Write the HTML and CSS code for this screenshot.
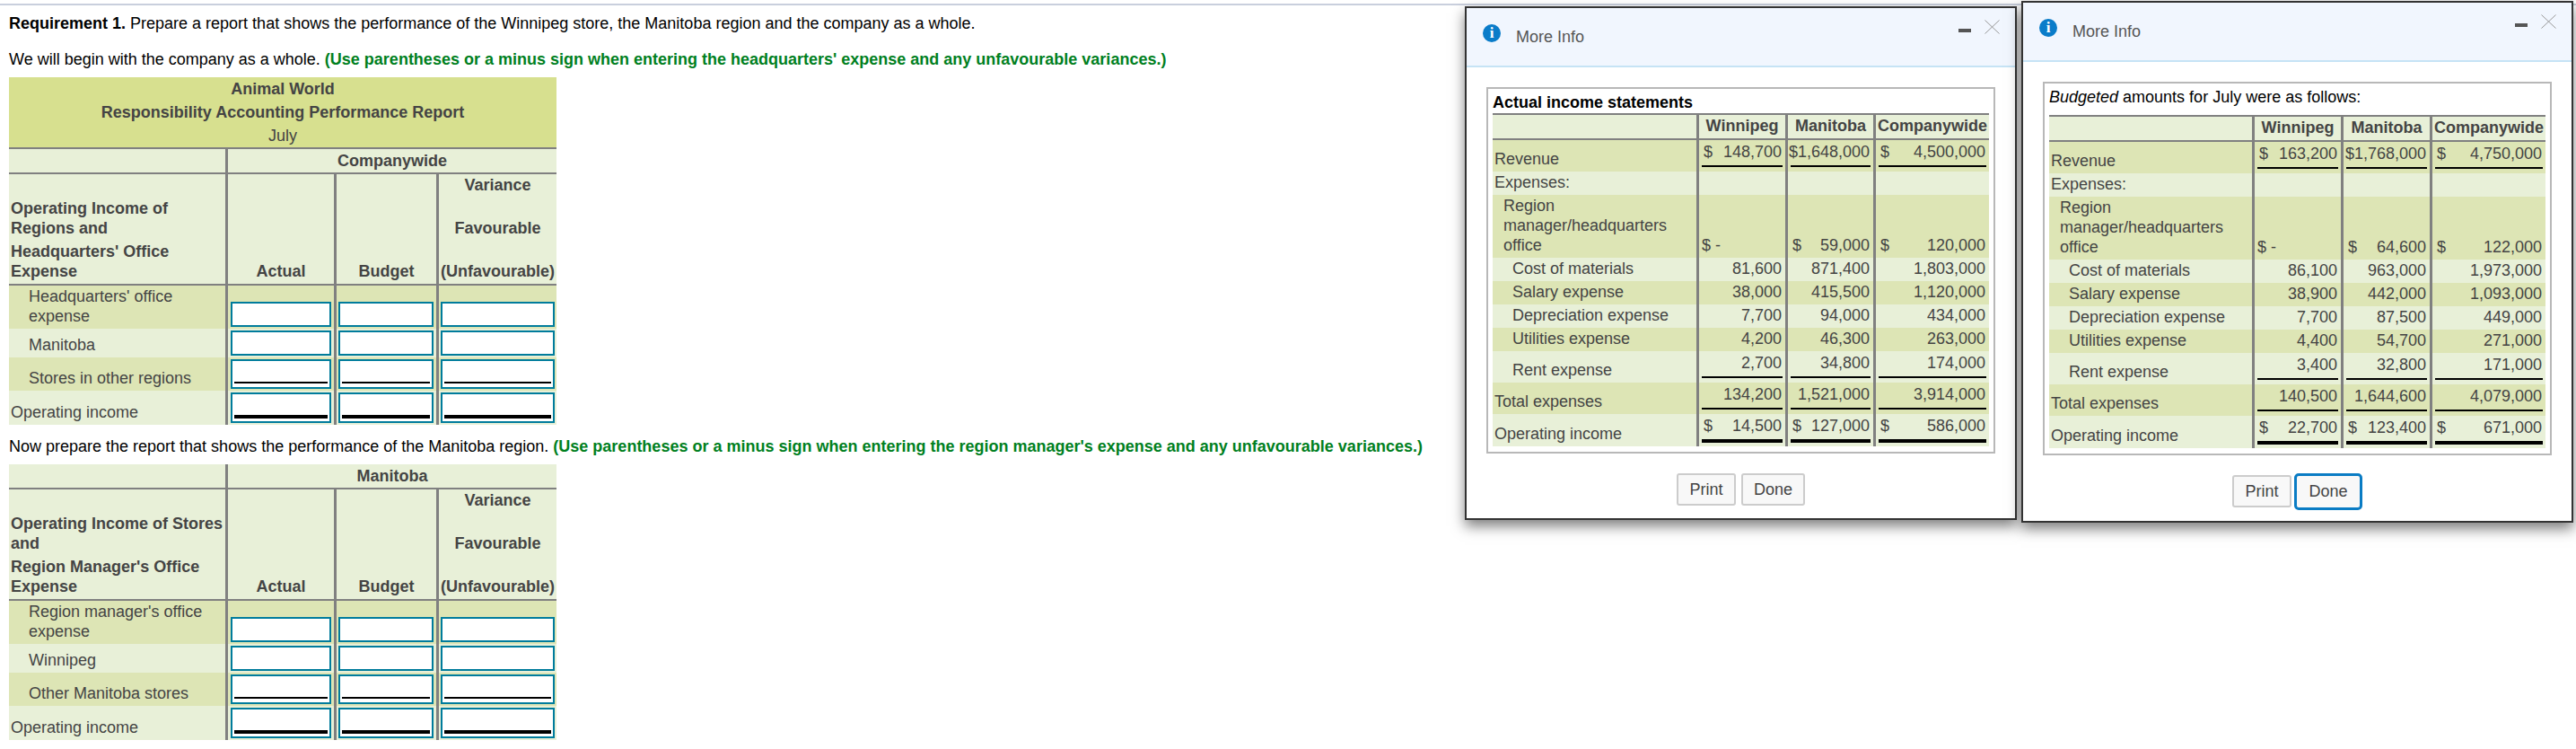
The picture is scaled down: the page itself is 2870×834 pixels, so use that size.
FILE: index.html
```html
<!DOCTYPE html>
<html lang="en">
<head>
<meta charset="utf-8">
<title>Responsibility Accounting Performance Report</title>
<link rel="stylesheet" href="styles.css">
</head>
<body>
<div class="topline"></div>
<main class="sheet">
  <p class="line first"><b>Requirement 1.</b> Prepare a report that shows the performance of the Winnipeg store, the Manitoba region and the company as a whole.</p>
  <p class="line second">We will begin with the company as a whole. <b class="hint">(Use parentheses or a minus sign when entering the headquarters' expense and any unfavourable variances.)</b></p>
  <table class="report">
    <colgroup><col class="w1"><col class="w2"><col class="w3"><col class="w4"></colgroup>
    <tr class="title"><td colspan="4"><b>Animal World</b><br><b>Responsibility Accounting Performance Report</b><br>July</td></tr>
    <tr class="band"><td></td><th colspan="3">Companywide</th></tr>
    <tr class="heads">
      <th class="lead"><div>Operating Income of Regions and</div><div class="tight">Headquarters' Office Expense</div></th>
      <th>Actual</th><th>Budget</th>
      <th><div>Variance</div><div class="gap">Favourable</div><div class="gap">(Unfavourable)</div></th>
    </tr>
    <tr class="row dark tall"><td class="sub">Headquarters' office expense</td><td class="a"><div class="field"><input></div></td><td class="b"><div class="field"><input></div></td><td class="c"><div class="field"><input></div></td></tr>
    <tr class="row plain"><td class="sub">Manitoba</td><td class="a"><div class="field"><input></div></td><td class="b"><div class="field"><input></div></td><td class="c"><div class="field"><input></div></td></tr>
    <tr class="row dark subtotal"><td class="sub">Stores in other regions</td><td class="a"><div class="field sum"><input></div></td><td class="b"><div class="field sum"><input></div></td><td class="c"><div class="field sum"><input></div></td></tr>
    <tr class="row plain grand"><td class="top">Operating income</td><td class="a"><div class="field total"><input></div></td><td class="b"><div class="field total"><input></div></td><td class="c"><div class="field total"><input></div></td></tr>
  </table>
  <p class="line third">Now prepare the report that shows the performance of the Manitoba region. <b class="hint">(Use parentheses or a minus sign when entering the region manager's expense and any unfavourable variances.)</b></p>
  <table class="report">
    <colgroup><col class="w1"><col class="w2"><col class="w3"><col class="w4"></colgroup>
    <tr class="band"><td></td><th colspan="3">Manitoba</th></tr>
    <tr class="heads">
      <th class="lead"><div>Operating Income of Stores and</div><div class="tight">Region Manager's Office Expense</div></th>
      <th>Actual</th><th>Budget</th>
      <th><div>Variance</div><div class="gap">Favourable</div><div class="gap">(Unfavourable)</div></th>
    </tr>
    <tr class="row dark tall"><td class="sub">Region manager's office expense</td><td class="a"><div class="field"><input></div></td><td class="b"><div class="field"><input></div></td><td class="c"><div class="field"><input></div></td></tr>
    <tr class="row plain"><td class="sub">Winnipeg</td><td class="a"><div class="field"><input></div></td><td class="b"><div class="field"><input></div></td><td class="c"><div class="field"><input></div></td></tr>
    <tr class="row dark subtotal"><td class="sub">Other Manitoba stores</td><td class="a"><div class="field sum"><input></div></td><td class="b"><div class="field sum"><input></div></td><td class="c"><div class="field sum"><input></div></td></tr>
    <tr class="row plain grand"><td class="top">Operating income</td><td class="a"><div class="field total"><input></div></td><td class="b"><div class="field total"><input></div></td><td class="c"><div class="field total"><input></div></td></tr>
  </table>
</main>

<section class="modal actual">
  <header class="modal-head">
    <span class="info">i</span><span class="modal-title">More Info</span>
    <span class="minus"></span>
    <svg class="close" width="17" height="16" viewBox="0 0 17 16"><path d="M0.5 0.5 16.5 15.5M16.5 0.5 0.5 15.5" fill="none" stroke="#999" stroke-width="1"/></svg>
  </header>
  <div class="box">
    <div class="box-title"><b>Actual income statements</b></div>
    <table class="data">
      <colgroup><col class="d1"><col class="d2"><col class="d3"><col class="d4"></colgroup>
      <tr class="dhead"><td></td><th>Winnipeg</th><th>Manitoba</th><th>Companywide</th></tr>
      <tr class="dark"><td class="l0">Revenue</td><td><div class="amt rule"><span>$</span><span>148,700</span></div></td><td><div class="amt rule"><span>$1,648,000</span></div></td><td><div class="amt rule"><span>$</span><span>4,500,000</span></div></td></tr>
      <tr class="plain"><td class="l0">Expenses:</td><td></td><td></td><td></td></tr>
      <tr class="dark"><td class="l1">Region manager/headquarters office</td><td><div class="amt start"><span>$ -</span></div></td><td><div class="amt"><span>$</span><span>59,000</span></div></td><td><div class="amt"><span>$</span><span>120,000</span></div></td></tr>
      <tr class="plain"><td class="l2">Cost of materials</td><td><div class="amt"><span>81,600</span></div></td><td><div class="amt"><span>871,400</span></div></td><td><div class="amt"><span>1,803,000</span></div></td></tr>
      <tr class="dark"><td class="l2">Salary expense</td><td><div class="amt"><span>38,000</span></div></td><td><div class="amt"><span>415,500</span></div></td><td><div class="amt"><span>1,120,000</span></div></td></tr>
      <tr class="plain"><td class="l2">Depreciation expense</td><td><div class="amt"><span>7,700</span></div></td><td><div class="amt"><span>94,000</span></div></td><td><div class="amt"><span>434,000</span></div></td></tr>
      <tr class="dark"><td class="l2">Utilities expense</td><td><div class="amt"><span>4,200</span></div></td><td><div class="amt"><span>46,300</span></div></td><td><div class="amt"><span>263,000</span></div></td></tr>
      <tr class="plain"><td class="l2">Rent expense</td><td><div class="amt rule"><span>2,700</span></div></td><td><div class="amt rule"><span>34,800</span></div></td><td><div class="amt rule"><span>174,000</span></div></td></tr>
      <tr class="dark"><td class="l0">Total expenses</td><td><div class="amt rule"><span>134,200</span></div></td><td><div class="amt rule"><span>1,521,000</span></div></td><td><div class="amt rule"><span>3,914,000</span></div></td></tr>
      <tr class="plain"><td class="l0">Operating income</td><td><div class="amt dbl"><span>$</span><span>14,500</span></div></td><td><div class="amt dbl"><span>$</span><span>127,000</span></div></td><td><div class="amt dbl"><span>$</span><span>586,000</span></div></td></tr>
    </table>
  </div>
  <footer class="modal-foot"><button class="btn">Print</button><button class="btn">Done</button></footer>
</section>

<section class="modal budget">
  <header class="modal-head">
    <span class="info">i</span><span class="modal-title">More Info</span>
    <span class="minus"></span>
    <svg class="close" width="17" height="16" viewBox="0 0 17 16"><path d="M0.5 0.5 16.5 15.5M16.5 0.5 0.5 15.5" fill="none" stroke="#999" stroke-width="1"/></svg>
  </header>
  <div class="box">
    <div class="box-title"><i>Budgeted</i> amounts for July were as follows:</div>
    <table class="data">
      <colgroup><col class="d1"><col class="d2"><col class="d3"><col class="d4"></colgroup>
      <tr class="dhead"><td></td><th>Winnipeg</th><th>Manitoba</th><th>Companywide</th></tr>
      <tr class="dark"><td class="l0">Revenue</td><td><div class="amt rule"><span>$</span><span>163,200</span></div></td><td><div class="amt rule"><span>$1,768,000</span></div></td><td><div class="amt rule"><span>$</span><span>4,750,000</span></div></td></tr>
      <tr class="plain"><td class="l0">Expenses:</td><td></td><td></td><td></td></tr>
      <tr class="dark"><td class="l1">Region manager/headquarters office</td><td><div class="amt start"><span>$ -</span></div></td><td><div class="amt"><span>$</span><span>64,600</span></div></td><td><div class="amt"><span>$</span><span>122,000</span></div></td></tr>
      <tr class="plain"><td class="l2">Cost of materials</td><td><div class="amt"><span>86,100</span></div></td><td><div class="amt"><span>963,000</span></div></td><td><div class="amt"><span>1,973,000</span></div></td></tr>
      <tr class="dark"><td class="l2">Salary expense</td><td><div class="amt"><span>38,900</span></div></td><td><div class="amt"><span>442,000</span></div></td><td><div class="amt"><span>1,093,000</span></div></td></tr>
      <tr class="plain"><td class="l2">Depreciation expense</td><td><div class="amt"><span>7,700</span></div></td><td><div class="amt"><span>87,500</span></div></td><td><div class="amt"><span>449,000</span></div></td></tr>
      <tr class="dark"><td class="l2">Utilities expense</td><td><div class="amt"><span>4,400</span></div></td><td><div class="amt"><span>54,700</span></div></td><td><div class="amt"><span>271,000</span></div></td></tr>
      <tr class="plain"><td class="l2">Rent expense</td><td><div class="amt rule"><span>3,400</span></div></td><td><div class="amt rule"><span>32,800</span></div></td><td><div class="amt rule"><span>171,000</span></div></td></tr>
      <tr class="dark"><td class="l0">Total expenses</td><td><div class="amt rule"><span>140,500</span></div></td><td><div class="amt rule"><span>1,644,600</span></div></td><td><div class="amt rule"><span>4,079,000</span></div></td></tr>
      <tr class="plain"><td class="l0">Operating income</td><td><div class="amt dbl"><span>$</span><span>22,700</span></div></td><td><div class="amt dbl"><span>$</span><span>123,400</span></div></td><td><div class="amt dbl"><span>$</span><span>671,000</span></div></td></tr>
    </table>
  </div>
  <footer class="modal-foot"><button class="btn">Print</button><button class="btn focus">Done</button></footer>
</section>
</body>
</html>
```
FILE: styles.css
```css
* { box-sizing: border-box; }
html, body { margin: 0; padding: 0; }
body {
  position: relative;
  width: 2870px;
  height: 834px;
  overflow: hidden;
  background: #fff;
  color: #000;
  font: 18px/22px "Liberation Sans", Arial, sans-serif;
}
.topline { height: 2px; margin-top: 4px; background: #c9cfdd; }
.sheet { padding-left: 10px; }
.line { margin: 0; white-space: nowrap; }
.first { margin-top: 9px; }
.second { margin-top: 18px; }
.third { margin-top: 13px; }
.hint { color: #00801e; }

.report {
  width: 610px;
  margin-top: 9px;
  table-layout: fixed;
  border-collapse: separate;
  border-spacing: 0;
  color: #444;
}
.w1 { width: 244px; }
.w2 { width: 121px; }
.w3 { width: 114px; }
.w4 { width: 131px; }
.report td, .report th { padding: 0; vertical-align: bottom; font-weight: normal; }
.report th { font-weight: bold; text-align: center; }
.report tr > *:not(:last-child) { border-right: 3px solid #808080; }
.report .title td {
  height: 80px;
  background: #d7e08f;
  border-bottom: 2px solid #808080;
  text-align: center;
  line-height: 26px;
}
.report .band > * {
  height: 28px;
  background: #e8f0d8;
  border-bottom: 2px solid #808080;
  padding-bottom: 2px;
}
.report .heads th {
  height: 124px;
  background: #e8f0d8;
  border-bottom: 2px solid #808080;
  padding-bottom: 3px;
}
.report .heads .lead { text-align: left; padding-left: 2px; }
.tight { margin-top: 4px; }
.gap { margin-top: 26px; }
.dark > * { background: #dde5b5; }
.plain > * { background: #e8f0d8; }
.report .row td { height: 32px; padding-bottom: 2px; }
.report .row.tall td { height: 48px; }
.report .row.subtotal td { height: 37px; }
.report .row.grand td { height: 38px; }
.report .row td.sub { padding: 0 2px 3px 22px; }
.report .row td.top { padding: 0 2px 3px 2px; }
.report .row td.a { padding-left: 3px; padding-right: 3px; }
.report .row td.b { padding-left: 2px; padding-right: 3px; }
.report .row td.c { padding-left: 2px; padding-right: 2px; }
.field {
  display: flex;
  height: 28px;
  padding: 0 2px;
  background: #fff;
  border: 2px solid #007c9c;
}
.field input {
  display: block;
  width: 100%;
  min-width: 0;
  padding: 0;
  background: transparent;
  border: 0;
  outline: 0;
}
.field.sum { height: 33px; padding-bottom: 4px; }
.field.sum input { border-bottom: 2px solid #000; }
.field.total { height: 34px; padding-bottom: 3px; }
.field.total input { border-bottom: 4px solid #000; }

.modal {
  position: absolute;
  display: flex;
  flex-direction: column;
  width: 615px;
  background: #fff;
  border: 2px solid #333;
  box-shadow: 0 7px 14px rgba(0, 0, 0, .5);
}
.actual { left: 1632px; top: 7px; height: 572px; }
.budget { left: 2252px; top: 1px; height: 581px; }
.modal-head {
  display: flex;
  align-items: flex-start;
  flex: none;
  height: 66px;
  padding: 0 17px 0 18px;
  background: #f1f6fe;
  border-bottom: 2px solid #c6e3f5;
}
.info {
  width: 20px;
  height: 20px;
  margin-top: 18px;
  border-radius: 50%;
  background: #0a7cc9;
  color: #fff;
  font: bold 17px/20px "Liberation Serif", serif;
  text-align: center;
}
.modal-title { margin: 21px 0 0 17px; color: #555; }
.minus { width: 14px; height: 4px; margin: 23px 0 0 auto; background: #555; }
.close { margin: 13px 0 0 15px; }
.box {
  flex: none;
  margin: 22px 22px 0;
  padding: 0 5px 6px;
  border: 2px solid #b8b8b8;
}
.box-title { padding-top: 4px; margin-bottom: 1px; white-space: nowrap; }
.budget .box-title { margin-bottom: 9px; }
.data {
  width: 553px;
  table-layout: fixed;
  border-collapse: separate;
  border-spacing: 0;
  color: #444;
}
.d1 { width: 230px; }
.d2 { width: 99px; }
.d3 { width: 98px; }
.d4 { width: 126px; }
.budget .d1 { width: 229px; }
.budget .d3 { width: 99px; }
.data td, .data th { padding: 0 3px; vertical-align: bottom; font-weight: normal; }
.data tr > *:not(:last-child) { border-right: 3px solid #808080; }
.data .dhead > * {
  height: 30px;
  background: #e8f0d8;
  border-top: 2px solid #808080;
  border-bottom: 2px solid #808080;
  padding: 0 0 3px;
  font-weight: bold;
  text-align: center;
  white-space: nowrap;
}
.data td { height: 26px; padding-bottom: 3px; }
.data td:has(.rule), .data td:has(.dbl) { height: 35px; }
.data td:has(.rule) { padding-bottom: 5px; }
.data td:has(.dbl) { height: 36px; padding-bottom: 4px; }
.data td.l0 { padding: 0 2px 3px; }
.data td.l1 { height: 70px; padding: 0 2px 3px 12px; }
.data td.l2 { padding: 0 2px 3px 22px; white-space: nowrap; }
.amt { display: flex; justify-content: flex-end; padding-right: 1px; white-space: nowrap; }
.amt:has(span + span) { justify-content: space-between; padding-left: 2px; }
.amt.start { justify-content: flex-start; }
.rule { padding-bottom: 4px; border-bottom: 2px solid #000; }
.dbl { padding-bottom: 4px; border-bottom: 4px solid #000; }
.modal-foot {
  display: flex;
  justify-content: center;
  align-items: center;
  gap: 6px;
  height: 36px;
  margin-top: 22px;
}
.budget .modal-foot { gap: 3px; }
.btn {
  width: 66px;
  height: 36px;
  padding: 0;
  background: #f8f8f8;
  border: 2px solid #ccc;
  border-radius: 3px;
  color: #444;
  font: 18px "Liberation Sans", Arial, sans-serif;
}
.btn + .btn { width: 71px; }
.btn.focus { width: 76px; height: 41px; border: 3px solid #0a7cc4; border-radius: 5px; }
```
